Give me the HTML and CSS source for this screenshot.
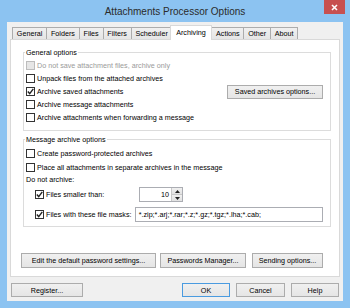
FILE: index.html
```html
<!DOCTYPE html>
<html>
<head>
<meta charset="utf-8">
<link rel="stylesheet" href="styles.css">
</head>
<body>
<div class="window">
  <div class="titlebar">
    <span class="title">Attachments Processor Options</span>
    <div class="close"><svg width="7" height="7" viewBox="0 0 7 7"><path d="M1 1L6 6M6 1L1 6" stroke="#fff" stroke-width="1.6"/></svg></div>
  </div>
  <div class="client">
    <div class="tabs">
      <div class="tab">General</div>
      <div class="tab">Folders</div>
      <div class="tab">Files</div>
      <div class="tab">Filters</div>
      <div class="tab">Scheduler</div>
      <div class="tab active">Archiving</div>
      <div class="tab">Actions</div>
      <div class="tab">Other</div>
      <div class="tab">About</div>
    </div>
    <div class="panel">
      <fieldset class="group g1">
        <legend>General options</legend>
        <div class="row"><span class="check disabled"></span><span class="muted">Do not save attachment files, archive only</span></div>
        <div class="row"><span class="check"></span><span>Unpack files from the attached archives</span></div>
        <div class="row"><span class="check"><svg width="7" height="7" viewBox="0 0 7 7"><path d="M0.8 3.6L2.7 5.6L6.3 0.9" fill="none" stroke="#222" stroke-width="1.4"/></svg></span><span>Archive saved attachments</span><span class="spacer"></span><button class="btn btn-saved">Saved archives options...</button></div>
        <div class="row"><span class="check"></span><span>Archive message attachments</span></div>
        <div class="row"><span class="check"></span><span>Archive attachments when forwarding a message</span></div>
      </fieldset>
      <fieldset class="group g2">
        <legend>Message archive options</legend>
        <div class="row tall"><span class="check"></span><span>Create password-protected archives</span></div>
        <div class="row tall"><span class="check"></span><span>Place all attachments in separate archives in the message</span></div>
        <div class="row label-row"><span>Do not archive:</span></div>
        <div class="row sub spin-row">
          <div class="label-col"><span class="check"><svg width="7" height="7" viewBox="0 0 7 7"><path d="M0.8 3.6L2.7 5.6L6.3 0.9" fill="none" stroke="#222" stroke-width="1.4"/></svg></span><span>Files smaller than:</span></div>
          <div class="spinner">
            <div class="spin-value">10</div>
            <div class="spin-btns">
              <div class="spin-btn"><svg width="5" height="3" viewBox="0 0 5 3"><path d="M0 3L2.5 0L5 3Z" fill="#222"/></svg></div>
              <div class="spin-btn"><svg width="5" height="3" viewBox="0 0 5 3"><path d="M0 0L2.5 3L5 0Z" fill="#222"/></svg></div>
            </div>
          </div>
        </div>
        <div class="row sub mask-row">
          <div class="label-col"><span class="check"><svg width="7" height="7" viewBox="0 0 7 7"><path d="M0.8 3.6L2.7 5.6L6.3 0.9" fill="none" stroke="#222" stroke-width="1.4"/></svg></span><span>Files with these file masks:</span></div>
          <div class="textbox">*.zip;*.arj;*.rar;*.z;*.gz;*.tgz;*.lha;*.cab;</div>
        </div>
      </fieldset>
      <div class="panel-buttons">
        <button class="btn btn-edit">Edit the default password settings...</button>
        <button class="btn btn-pm">Passwords Manager...</button>
        <button class="btn btn-send">Sending options...</button>
      </div>
    </div>
    <div class="dialog-buttons">
      <button class="btn btn-register">Register...</button>
      <span class="spacer"></span>
      <button class="btn btn-ok">OK</button>
      <button class="btn btn-cancel">Cancel</button>
      <button class="btn btn-help">Help</button>
    </div>
  </div>
</div>
</body>
</html>
```
FILE: styles.css
```css
* { box-sizing: border-box; }
html, body { margin: 0; padding: 0; }
body {
  width: 350px;
  height: 308px;
  overflow: hidden;
  font-family: "Liberation Sans", Arial, sans-serif;
  font-size: 7.2px;
  color: #000;
}
.window {
  width: 350px;
  height: 308px;
  background: #8cc3f1;
  display: flex;
  flex-direction: column;
}
.titlebar {
  height: 22px;
  position: relative;
  display: flex;
  align-items: center;
  justify-content: center;
}
.title {
  font-size: 10px;
  color: #2b2b2b;
}
.close {
  position: absolute;
  top: 0;
  right: 5px;
  width: 21px;
  height: 14px;
  background: #c75050;
  display: flex;
  align-items: center;
  justify-content: center;
}
.close svg { display: block; }
.client {
  flex: 1;
  margin: 0 7px 7px;
  background: #f0f0f0;
  padding: 3px 3px 4px;
  display: flex;
  flex-direction: column;
}
.tabs {
  display: flex;
  height: 14px;
  align-items: flex-end;
  padding-left: 2px;
  position: relative;
  z-index: 1;
}
.tab {
  height: 12px;
  line-height: 11px;
  padding: 0 3.8px;
  border: 1px solid #acacac;
  border-bottom: none;
  background: linear-gradient(#f0f0f0, #e5e5e5);
  margin-right: -1px;
  white-space: nowrap;
}
.tab.active {
  height: 15px;
  line-height: 13px;
  margin: 0 -1px -1px -2px;
  padding: 0 5.5px;
  background: #fff;
  border-color: #d9d9d9;
  position: relative;
  z-index: 2;
}
.panel {
  height: 238px;
  background: #fff;
  border: 1px solid #d9d9d9;
  padding: 8px 8px 0 12px;
  display: flex;
  flex-direction: column;
}
fieldset.group {
  margin: 0;
  padding: 2px 7px 6px 2px;
  border: 1px solid #dcdcdc;
  min-width: 0;
}
fieldset.g2 {
  margin-top: 4px;
  padding-bottom: 4px;
}
legend {
  padding: 0 1px;
  margin-left: -1px;
  line-height: 9px;
}
.row {
  display: flex;
  align-items: center;
  height: 13px;
  white-space: nowrap;
}
.row.tall { height: 14px; }
.row.label-row { height: 10px; }
.row.sub { padding-left: 9px; height: 15px; }
.spin-row { margin-top: 3px; }
.mask-row { margin-top: 5px; }
.spacer { flex: 1; }
.check {
  width: 9px;
  height: 9px;
  border: 1px solid #333;
  background: #fff;
  margin-right: 2px;
  flex: none;
  display: flex;
  align-items: center;
  justify-content: center;
}
.check.disabled {
  border-color: #bcbcbc;
  background: #e6e6e6;
}
.check svg { display: block; }
.muted { color: #9a9a9a; }
.label-col {
  width: 100px;
  display: flex;
  align-items: center;
}
.spinner {
  margin-left: 4px;
  width: 44px;
  height: 15px;
  display: flex;
  border: 1px solid #abadb3;
  background: #fff;
}
.spin-value {
  flex: 1;
  text-align: right;
  padding-right: 2px;
  line-height: 13px;
}
.spin-btns {
  width: 11px;
  display: flex;
  flex-direction: column;
  border-left: 1px solid #c8c8c8;
}
.spin-btn {
  flex: 1;
  background: linear-gradient(#f0f0f0, #e2e2e2);
  display: flex;
  align-items: center;
  justify-content: center;
}
.spin-btn + .spin-btn { border-top: 1px solid #c8c8c8; }
.spin-btn svg { display: block; }
.textbox {
  width: 189px;
  height: 15px;
  border: 1px solid #abadb3;
  background: #fff;
  padding-left: 3px;
  line-height: 13px;
}
.btn {
  height: 14px;
  border: 1px solid #acacac;
  background: linear-gradient(#f0f0f0, #e5e5e5);
  display: flex;
  align-items: center;
  justify-content: center;
  font: inherit;
  color: #000;
  padding: 0;
  margin: 0;
  white-space: nowrap;
}
.btn-saved { width: 96px; flex: none; }
.panel-buttons {
  display: flex;
  margin-top: 26px;
  margin-left: -2px;
}
.panel-buttons .btn { height: 15px; }
.btn-edit { width: 135px; }
.btn-pm { width: 86px; margin-left: 4px; }
.btn-send { width: 71px; margin-left: 6px; }
.dialog-buttons {
  display: flex;
  margin-top: 6px;
  padding: 0 1px;
}
.btn-register { width: 72px; }
.btn-ok { width: 48px; border-color: #4a9be0; }
.btn-cancel { width: 49px; margin-left: 6px; }
.btn-help { width: 48px; margin-left: 6px; }
```
